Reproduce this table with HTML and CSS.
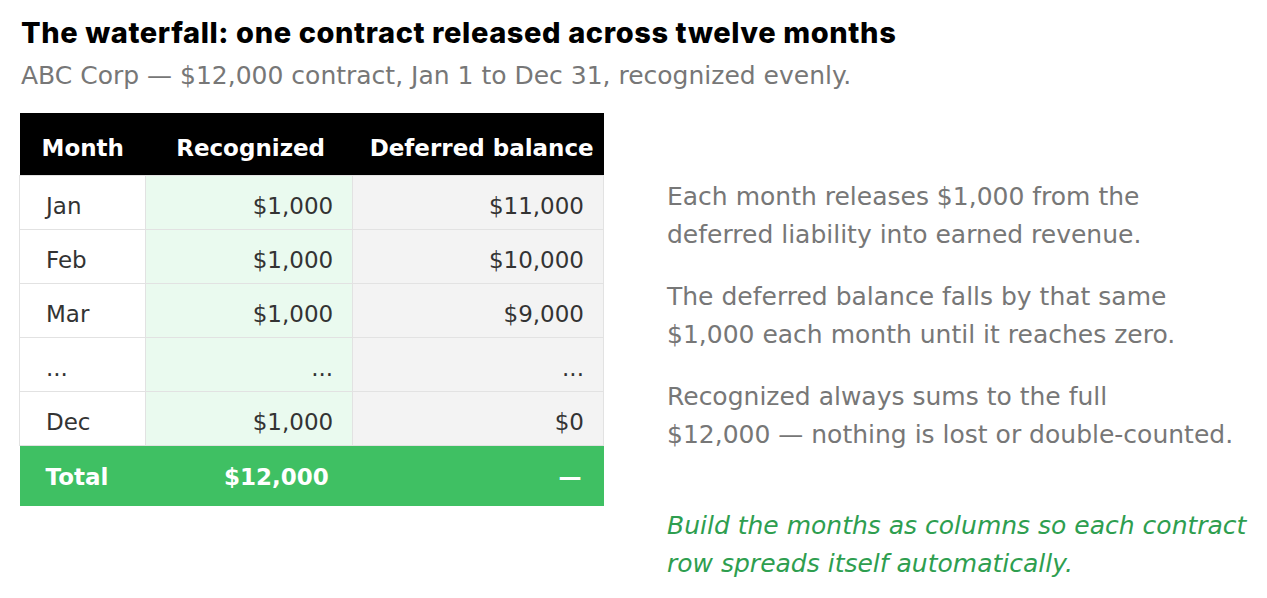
FILE: index.html
```html
<!DOCTYPE html>
<html>
<head>
<meta charset="utf-8">
<link rel="stylesheet" href="styles.css">
</head>
<body>
<div class="page">
  <h1 class="title">The waterfall: one contract released across twelve months</h1>
  <p class="subtitle">ABC Corp — $12,000 contract, Jan 1 to Dec 31, recognized evenly.</p>
  <div class="main">
    <table class="wf">
      <thead>
        <tr><th class="c-month">Month</th><th class="c-rec">Recognized</th><th class="c-def">Deferred balance</th></tr>
      </thead>
      <tbody>
        <tr><td class="c-month">Jan</td><td class="c-rec num">$1,000</td><td class="c-def num">$11,000</td></tr>
        <tr><td class="c-month">Feb</td><td class="c-rec num">$1,000</td><td class="c-def num">$10,000</td></tr>
        <tr><td class="c-month">Mar</td><td class="c-rec num">$1,000</td><td class="c-def num">$9,000</td></tr>
        <tr><td class="c-month">...</td><td class="c-rec num">...</td><td class="c-def num">...</td></tr>
        <tr><td class="c-month">Dec</td><td class="c-rec num">$1,000</td><td class="c-def num">$0</td></tr>
      </tbody>
      <tfoot>
        <tr><td class="c-month">Total</td><td class="c-rec num">$12,000</td><td class="c-def num">—</td></tr>
      </tfoot>
    </table>
    <div class="notes">
      <p class="note">Each month releases $1,000 from the deferred liability into earned revenue.</p>
      <p class="note">The deferred balance falls by that same $1,000 each month until it reaches zero.</p>
      <p class="note">Recognized always sums to the full $12,000&nbsp;— nothing is lost or double-counted.</p>
      <p class="tip">Build the months as columns so each contract row spreads itself automatically.</p>
    </div>
  </div>
</div>
</body>
</html>
```

FILE: styles.css
```css
* { box-sizing: border-box; }
html, body { margin: 0; padding: 0; background: #fff; }
body { font-family: "DejaVu Sans", sans-serif; color: #333; }
.page { padding: 14px 20px 0 20px; }
.title {
  margin: 0;
  font-family: "Inter", sans-serif;
  font-weight: 800;
  font-size: 29px;
  line-height: 38px;
  letter-spacing: 0.6px;
  color: #000;
  padding-left: 1px;
}
.subtitle {
  margin: 6px 0 0 0;
  font-size: 25px;
  line-height: 36px;
  color: #777;
  padding-left: 1px;
}
.main { display: flex; align-items: flex-start; margin-top: 19px; }
.wf { border-collapse: collapse; width: 585px; font-size: 23px; flex: none; margin-left: -1px; }
.wf th {
  background: #000; color: #fff; font-weight: bold;
  height: 62px; padding: 8px 0 0 22px; text-align: left; white-space: nowrap;
}
.wf thead th.c-rec { padding-left: 31px; }
.wf thead th.c-def { padding-left: 17px; }
.wf td { height: 54px; padding: 8px 19px 0 26px; border: 1px solid #e2e2e2; color: #333; white-space: nowrap; }
.wf .c-month { width: 126px; }
.wf .c-rec { width: 208px; }
.wf .c-def { width: 251px; }
.wf tbody td.c-month { background: #fff; }
.wf tbody td.c-rec { background: #eafaef; }
.wf tbody td.c-def { background: #f3f3f3; }
.wf .num { text-align: right; }
.wf tfoot td { background: #3fc063; color: #fff; font-weight: bold; height: 61px; border: none; padding-top: 2px; }
.wf tfoot td.c-rec { padding-right: 24px; }
.wf tfoot td.c-def { padding-right: 22px; }
.notes { margin-left: 63px; padding-top: 65px; width: 580px; }
.note { margin: 0 0 24px 0; font-size: 25px; line-height: 38px; color: #777; }
.tip { margin: 53px 0 0 0; font-size: 25px; line-height: 38px; color: #2e9e4f; font-style: italic; }
```
